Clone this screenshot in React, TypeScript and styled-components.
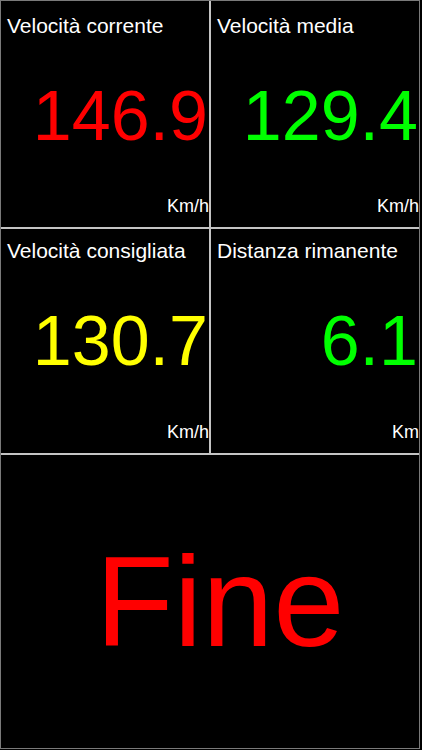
import styled, {createGlobalStyle} from "styled-components";

const GlobalStyle = createGlobalStyle`
    html, body {
        margin: 0;
        padding: 0;
        background: #000;
    }
    body {
        font-family: "Liberation Sans", Arial, sans-serif;
    }
`;

type Reading = {
    title: string;
    value: string;
    unit: string;
    color: string;
};

const readings: Reading[] = [
    {title: "Velocità corrente", value: "146.9", unit: "Km/h", color: "#ff0000"},
    {title: "Velocità media", value: "129.4", unit: "Km/h", color: "#00ff00"},
    {title: "Velocità consigliata", value: "130.7", unit: "Km/h", color: "#ffff00"},
    {title: "Distanza rimanente", value: "6.1", unit: "Km", color: "#00ff00"},
];

function App() {
    return (
        <>
            <GlobalStyle/>
            <Screen>
                {readings.map((r, i) => (
                    <Cell key={r.title} $top={i < 2}>
                        <Title>{r.title}</Title>
                        <Value $color={r.color}>{r.value}</Value>
                        <Unit>{r.unit}</Unit>
                    </Cell>
                ))}
                <EndCell>
                    <EndLabel>Fine</EndLabel>
                </EndCell>
            </Screen>
        </>
    );
}
export default App;

// style
const Screen = styled.div`
    box-sizing: border-box;
    width: 420px;
    height: 749px;
    border: 1px solid #7a7a7a;
    display: grid;
    grid-template-columns: 1fr 1fr;
    grid-template-rows: 226px 224px 1fr;
    gap: 2px;
    background: #c4c4c4;
`;

const Cell = styled.div<{ $top: boolean }>`
    background: #000;
    display: grid;
    grid-template-rows: 40px 1fr 40px;
    color: #fff;
    padding-top: ${(p) => (p.$top ? "3px" : "0")};
`;

const Title = styled.div`
    font-size: 21px;
    line-height: 23px;
    padding: 10px 0 0 6px;
    white-space: nowrap;
`;

const Value = styled.div<{ $color: string }>`
    color: ${(p) => p.$color};
    font-size: 70px;
    line-height: 1;
    text-align: right;
    padding-right: 1px;
    align-self: center;
    white-space: nowrap;
`;

const Unit = styled.div`
    font-size: 18px;
    line-height: 20px;
    text-align: right;
    align-self: end;
    padding-bottom: 11px;
`;

const EndCell = styled.div`
    grid-column: 1 / span 2;
    background: #000;
    display: flex;
    align-items: center;
    justify-content: center;
    padding-left: 20px;
`;

const EndLabel = styled.div`
    color: #ff0000;
    font-size: 128px;
    line-height: 1;
`;
